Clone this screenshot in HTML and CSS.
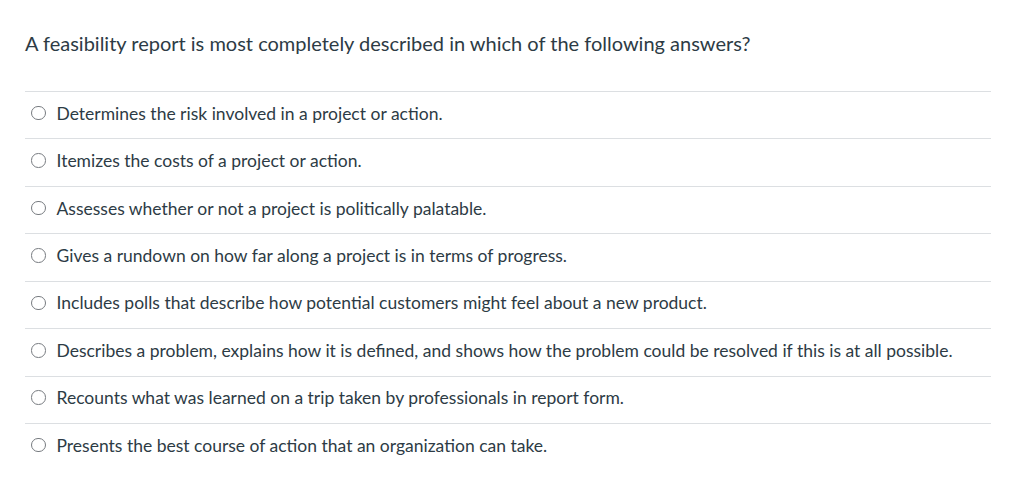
FILE: index.html
```html
<!DOCTYPE html>
<html>
<head>
<meta charset="utf-8">
<link rel="stylesheet" href="styles.css">
</head>
<body>
<div class="quiz">
  <div class="question">A feasibility report is most completely described in which of the following answers?</div>
  <div class="answers">
    <label class="answer"><span class="radio"></span><span class="text">Determines the risk involved in a project or action.</span></label>
    <label class="answer"><span class="radio"></span><span class="text">Itemizes the costs of a project or action.</span></label>
    <label class="answer"><span class="radio"></span><span class="text">Assesses whether or not a project is politically palatable.</span></label>
    <label class="answer"><span class="radio"></span><span class="text">Gives a rundown on how far along a project is in terms of progress.</span></label>
    <label class="answer"><span class="radio"></span><span class="text">Includes polls that describe how potential customers might feel about a new product.</span></label>
    <label class="answer"><span class="radio"></span><span class="text">Describes a problem, explains how it is defined, and shows how the problem could be resolved if this is at all possible.</span></label>
    <label class="answer"><span class="radio"></span><span class="text">Recounts what was learned on a trip taken by professionals in report form.</span></label>
    <label class="answer"><span class="radio"></span><span class="text">Presents the best course of action that an organization can take.</span></label>
  </div>
</div>
</body>
</html>
```
FILE: styles.css
```css
html, body {
  margin: 0;
  padding: 0;
  background: #ffffff;
}
body {
  font-family: Lato, "Liberation Sans", sans-serif;
  color: #2d3b45;
}
.quiz {
  padding: 28px 0 0 25px;
  width: 966px;
}
.question {
  font-size: 20px;
  line-height: 30px;
  margin-bottom: 33px;
}
.answers {
  display: flex;
  flex-direction: column;
}
.answer {
  display: flex;
  align-items: center;
  box-sizing: border-box;
  height: 47.43px;
  border-top: 1px solid #dcdfe2;
  padding: 0 0 4px 6px;
  font-size: 17.5px;
}
.radio {
  box-sizing: border-box;
  width: 14.5px;
  height: 14.5px;
  border: 1.2px solid #777b80;
  border-radius: 50%;
  margin-right: 11px;
  flex: none;
}
```
